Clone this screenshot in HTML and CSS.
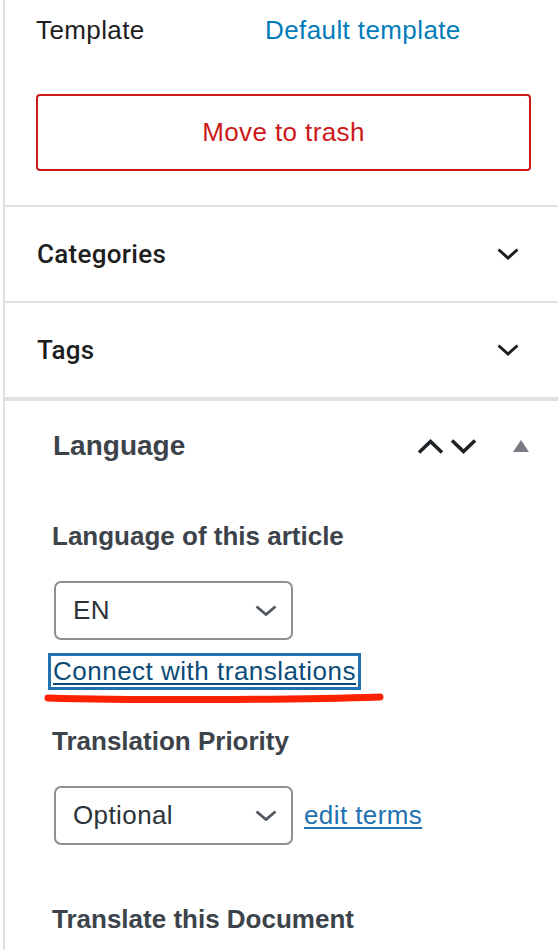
FILE: index.html
```html
<!DOCTYPE html>
<html lang="en">
<head>
<meta charset="utf-8">
<title>Document settings</title>
<link rel="stylesheet" href="styles.css">
</head>
<body>
<div class="sidebar">
  <section class="panel panel-template">
    <div class="template-row">
      <span class="row-label">Template</span>
      <a class="row-value" href="#">Default template</a>
    </div>
    <button class="trash-btn" type="button">Move to trash</button>
  </section>

  <section class="panel panel-toggle">
    <span class="toggle-title">Categories</span>
    <svg class="toggle-chevron" width="22" height="12" viewBox="0 0 22 12"><polyline points="1.5,1.5 11,10 20.5,1.5"/></svg>
  </section>

  <section class="panel panel-toggle">
    <span class="toggle-title">Tags</span>
    <svg class="toggle-chevron" width="22" height="12" viewBox="0 0 22 12"><polyline points="1.5,1.5 11,10 20.5,1.5"/></svg>
  </section>

  <section class="metabox">
    <div class="metabox-header">
      <h2 class="metabox-title">Language</h2>
      <div class="metabox-actions">
        <svg class="order-arrow" width="27" height="15" viewBox="0 0 27 15"><polyline points="2,13.5 13.5,2.5 25,13.5"/></svg>
        <svg class="order-arrow" width="27" height="15" viewBox="0 0 27 15"><polyline points="2,1.5 13.5,12.5 25,1.5"/></svg>
        <svg class="toggle-triangle" width="16" height="12" viewBox="0 0 16 12"><polygon points="8,0 16,12 0,12"/></svg>
      </div>
    </div>
    <div class="metabox-body">
      <div class="field-label">Language of this article</div>
      <div class="select-row">
        <div class="select">
          <span>EN</span>
          <svg class="select-chevron" width="22" height="11" viewBox="0 0 22 11"><polyline points="1.5,1.5 11,9.5 20.5,1.5"/></svg>
        </div>
      </div>
      <div class="connect-wrap">
        <a class="connect-link" href="#">Connect with translations</a>
        <svg class="annotation" width="345" height="12" viewBox="0 0 345 12"><path d="M4,6 C90,8.5 250,8 336,5"/></svg>
      </div>
      <div class="field-label field-spaced">Translation Priority</div>
      <div class="select-row">
        <div class="select">
          <span>Optional</span>
          <svg class="select-chevron" width="22" height="11" viewBox="0 0 22 11"><polyline points="1.5,1.5 11,9.5 20.5,1.5"/></svg>
        </div>
        <a class="edit-terms" href="#">edit terms</a>
      </div>
      <div class="field-label field-last">Translate this Document</div>
    </div>
  </section>
</div>
</body>
</html>
```

FILE: styles.css
```css
html, body {
  margin: 0;
  padding: 0;
  background: #ffffff;
  overflow: hidden;
}

body {
  font-family: "Liberation Sans", Arial, sans-serif;
  font-size: 26px;
  color: #1e1e1e;
}

.sidebar {
  margin-left: 3px;
  border-left: 2px solid #e0e0e0;
  height: 950px;
}

.panel {
  border-bottom: 2px solid #e0e0e0;
}

/* Template panel */
.panel-template {
  padding: 0 27px 34px 31px;
}

.template-row {
  display: flex;
  align-items: center;
  height: 60px;
  letter-spacing: 0.4px;
}

.row-label {
  width: 229px;
  color: #1e1e1e;
}

.row-value {
  color: #007cba;
  text-decoration: none;
}

.trash-btn {
  display: block;
  width: 100%;
  height: 77px;
  margin-top: 34px;
  border: 2px solid #cc1818;
  border-radius: 4px;
  background: #ffffff;
  color: #cc1818;
  font-family: inherit;
  font-size: 26px;
  letter-spacing: 0.4px;
  padding: 0;
}

/* Collapsed panels */
.panel-toggle {
  display: flex;
  align-items: center;
  justify-content: space-between;
  height: 94px;
  padding: 0 39px 0 32px;
}

.toggle-title {
  font-family: Roboto, "Liberation Sans", sans-serif;
  font-weight: 500;
  font-size: 26px;
  letter-spacing: 0.3px;
  color: #1e1e1e;
}

.toggle-chevron polyline {
  fill: none;
  stroke: #1e1e1e;
  stroke-width: 3;
}

/* Language metabox */
.metabox {
  border-top: 2px solid #e0e0e0;
}

.metabox-header {
  display: flex;
  align-items: center;
  justify-content: space-between;
  height: 90px;
  padding: 0 29px 0 48px;
}

.metabox-title {
  margin: 0;
  font-size: 28px;
  font-weight: 700;
  color: #3c434a;
}

.metabox-actions {
  display: flex;
  align-items: center;
  gap: 6px;
}

.order-arrow polyline {
  fill: none;
  stroke: #1d2327;
  stroke-width: 3.6;
}

.toggle-triangle {
  margin-left: 30px;
}

.toggle-triangle polygon {
  fill: #787c82;
}

.metabox-body {
  padding: 27px 0 0 47px;
}

.field-label {
  font-size: 26px;
  font-weight: 700;
  line-height: 36px;
  color: #3c434a;
}

.field-spaced {
  margin-top: 33px;
}

.field-last {
  margin-top: 56px;
}

.select-row {
  display: flex;
  align-items: center;
  margin-top: 27px;
  margin-left: 2px;
}

.select {
  box-sizing: border-box;
  display: flex;
  align-items: center;
  justify-content: space-between;
  width: 239px;
  height: 59px;
  padding: 0 14px 0 17px;
  border: 2px solid #8c8f94;
  border-radius: 7px;
  color: #2c3338;
  letter-spacing: 0.4px;
}

.select-chevron polyline {
  fill: none;
  stroke: #50575e;
  stroke-width: 2.8;
}

.edit-terms {
  margin-left: 11px;
  color: #2271b1;
  text-decoration: underline;
  text-decoration-thickness: 2px;
  text-underline-offset: 3px;
  letter-spacing: 0.4px;
}

.connect-wrap {
  position: relative;
  margin-top: 13px;
  margin-left: -4px;
  height: 37px;
}

.connect-link {
  box-sizing: border-box;
  display: inline-block;
  height: 37px;
  line-height: 31px;
  padding: 0 2px;
  border: 3px solid #2271b1;
  color: #0a4b78;
  text-decoration: underline;
  text-decoration-thickness: 2px;
  text-underline-offset: 3px;
  letter-spacing: 0.5px;
}

.annotation {
  position: absolute;
  left: -4px;
  top: 39px;
}

.annotation path {
  fill: none;
  stroke: #ff2200;
  stroke-width: 7;
  stroke-linecap: round;
}
```
